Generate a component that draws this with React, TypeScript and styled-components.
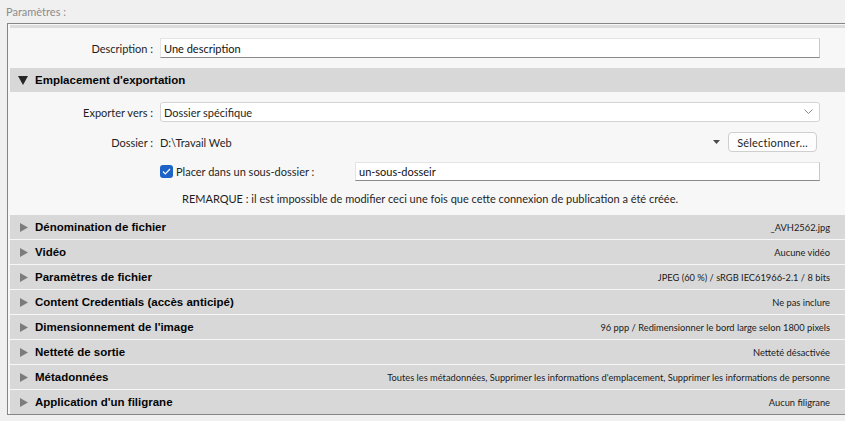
import React from 'react';
import styled, { createGlobalStyle } from 'styled-components';

const GlobalStyle = createGlobalStyle`
  html, body {
    margin: 0;
    padding: 0;
    background: #f0f0f0;
    overflow: hidden;
  }
  body {
    font-family: Lato, 'Liberation Sans', sans-serif;
    font-size: 11px;
    color: #1f1f1f;
  }
`;

const Page = styled.div`
  width: 845px;
  height: 421px;
  background: #f0f0f0;
`;

const Caption = styled.div`
  height: 23px;
  line-height: 23px;
  padding-left: 6px;
  color: #8c8c8c;
`;

const Panel = styled.div`
  margin-left: 7px;
  border: 1px solid #858585;
  border-right: none;
  background: #f7f7f7;
  padding: 1px 0 0 2px;
`;

const TopStrip = styled.div`
  height: 3px;
  background: #dcdcdc;
`;

const FormRow = styled.div`
  display: grid;
  grid-template-columns: 143px 1fr;
  column-gap: 7px;
  align-items: center;
  padding: 10px 25px 10px 0;
`;

const Label = styled.div`
  text-align: right;
  white-space: nowrap;
`;

const TextBox = styled.div<{ $height?: number }>`
  height: ${(p) => p.$height ?? 19}px;
  box-sizing: border-box;
  background: #fff;
  border: 1px solid #e4e4e4;
  border-bottom: 1px solid #8a8a8a;
  border-right-color: #c8c8c8;
  padding-left: 3px;
  display: flex;
  align-items: center;
  color: #111;
`;

const SectionHeader = styled.div<{ $open?: boolean }>`
  display: flex;
  align-items: center;
  height: 24px;
  background: #d8d8d8;
  padding: 0 15px 0 ${(p) => (p.$open ? 8 : 10)}px;
  border-top: ${(p) => (p.$open ? 'none' : '1px solid #f7f7f7')};
`;

const Arrow = styled.svg<{ $open?: boolean }>`
  width: ${(p) => (p.$open ? 10 : 8)}px;
  height: 9px;
  margin-right: 7px;
  flex: none;
  fill: ${(p) => (p.$open ? '#262626' : '#7c7c7c')};
`;

const Title = styled.div`
  font-family: 'Liberation Sans', Arial, sans-serif;
  font-weight: bold;
  font-size: 11.5px;
  color: #050505;
  flex: 1;
  white-space: nowrap;
`;

const Summary = styled.div`
  font-family: Lato, 'Liberation Sans', sans-serif;
  font-size: 9.3px;
  color: #1a1a1a;
  white-space: nowrap;
`;

const Body = styled.div`
  display: grid;
  grid-template-columns: 143px 1fr;
  grid-template-rows: 20px 20px 19px 15px;
  column-gap: 7px;
  row-gap: 10px;
  align-items: center;
  padding: 10px 25px 8px 0;
`;

const Select = styled.div`
  height: 20px;
  box-sizing: border-box;
  background: #fff;
  border: 1px solid #d4d4d4;
  border-radius: 3px;
  padding: 0 6px 0 3px;
  display: flex;
  align-items: center;
  justify-content: space-between;
`;

const Inline = styled.div`
  display: flex;
  align-items: center;
  height: 100%;
`;

const PathText = styled.div`
  flex: 1;
`;

const Button = styled.div`
  width: 89px;
  height: 20px;
  box-sizing: border-box;
  margin: 0 3px 0 8px;
  border: 1px solid #cfcfcf;
  border-radius: 4px;
  background: #fdfdfd;
  display: flex;
  align-items: center;
  justify-content: center;
  letter-spacing: 0.2px;
`;

const CheckLabel = styled.div`
  width: 195px;
  flex: none;
  display: flex;
  align-items: center;
`;

const CheckBox = styled.div`
  width: 13px;
  height: 13px;
  border-radius: 3px;
  background: #1d62c6;
  margin-right: 3px;
  display: flex;
  align-items: center;
  justify-content: center;
`;

const Note = styled.div`
  grid-column: 2;
  padding-left: 22px;
  white-space: nowrap;
`;

const Grow = styled.div`
  flex: 1;
`;

const sections: [string, string][] = [
  ['Dénomination de fichier', '_AVH2562.jpg'],
  ['Vidéo', 'Aucune vidéo'],
  ['Paramètres de fichier', 'JPEG (60 %) / sRGB IEC61966-2.1 / 8 bits'],
  ['Content Credentials (accès anticipé)', 'Ne pas inclure'],
  ['Dimensionnement de l\'image', '96 ppp / Redimensionner le bord large selon 1800 pixels'],
  ['Netteté de sortie', 'Netteté désactivée'],
  [
    'Métadonnées',
    'Toutes les métadonnées, Supprimer les informations d\'emplacement, Supprimer les informations de personne',
  ],
  ['Application d\'un filigrane', 'Aucun filigrane'],
];

const App = (): JSX.Element => (
  <Page>
    <GlobalStyle />
    <Caption>Paramètres :</Caption>
    <Panel>
      <TopStrip />
      <FormRow>
        <Label>Description :</Label>
        <TextBox $height={20}>Une description</TextBox>
      </FormRow>

      <SectionHeader $open>
        <Arrow $open viewBox="0 0 10 9">
          <path d="M0 0h10L5 9z" />
        </Arrow>
        <Title>Emplacement d'exportation</Title>
      </SectionHeader>
      <Body>
        <Label>Exporter vers :</Label>
        <Select>
          <span>Dossier spécifique</span>
          <svg width="9" height="6" viewBox="0 0 9 6">
            <path d="M0.5 0.5 4.5 4.5 8.5 0.5" fill="none" stroke="#8a8a8a" strokeWidth="1" />
          </svg>
        </Select>

        <Label>Dossier :</Label>
        <Inline>
          <PathText>D:\Travail Web</PathText>
          <svg width="7" height="4" viewBox="0 0 7 4">
            <path d="M0 0h7L3.5 4z" fill="#4a4a4a" />
          </svg>
          <Button>Sélectionner…</Button>
        </Inline>

        <div />
        <Inline>
          <CheckLabel>
            <CheckBox>
              <svg width="9" height="7" viewBox="0 0 9 7">
                <path d="M1 3.5 3.3 5.8 8 1" fill="none" stroke="#fff" strokeWidth="1.2" />
              </svg>
            </CheckBox>
            Placer dans un sous-dossier :
          </CheckLabel>
          <Grow>
            <TextBox $height={19}>un-sous-dosseir</TextBox>
          </Grow>
        </Inline>

        <Note>
          REMARQUE : il est impossible de modifier ceci une fois que cette connexion de publication a été créée.
        </Note>
      </Body>

      {sections.map(([title, value]) => (
        <SectionHeader key={title}>
          <Arrow viewBox="0 0 8 9">
            <path d="M0 0l8 4.5L0 9z" />
          </Arrow>
          <Title>{title}</Title>
          <Summary>{value}</Summary>
        </SectionHeader>
      ))}
    </Panel>
  </Page>
);

export default App;
